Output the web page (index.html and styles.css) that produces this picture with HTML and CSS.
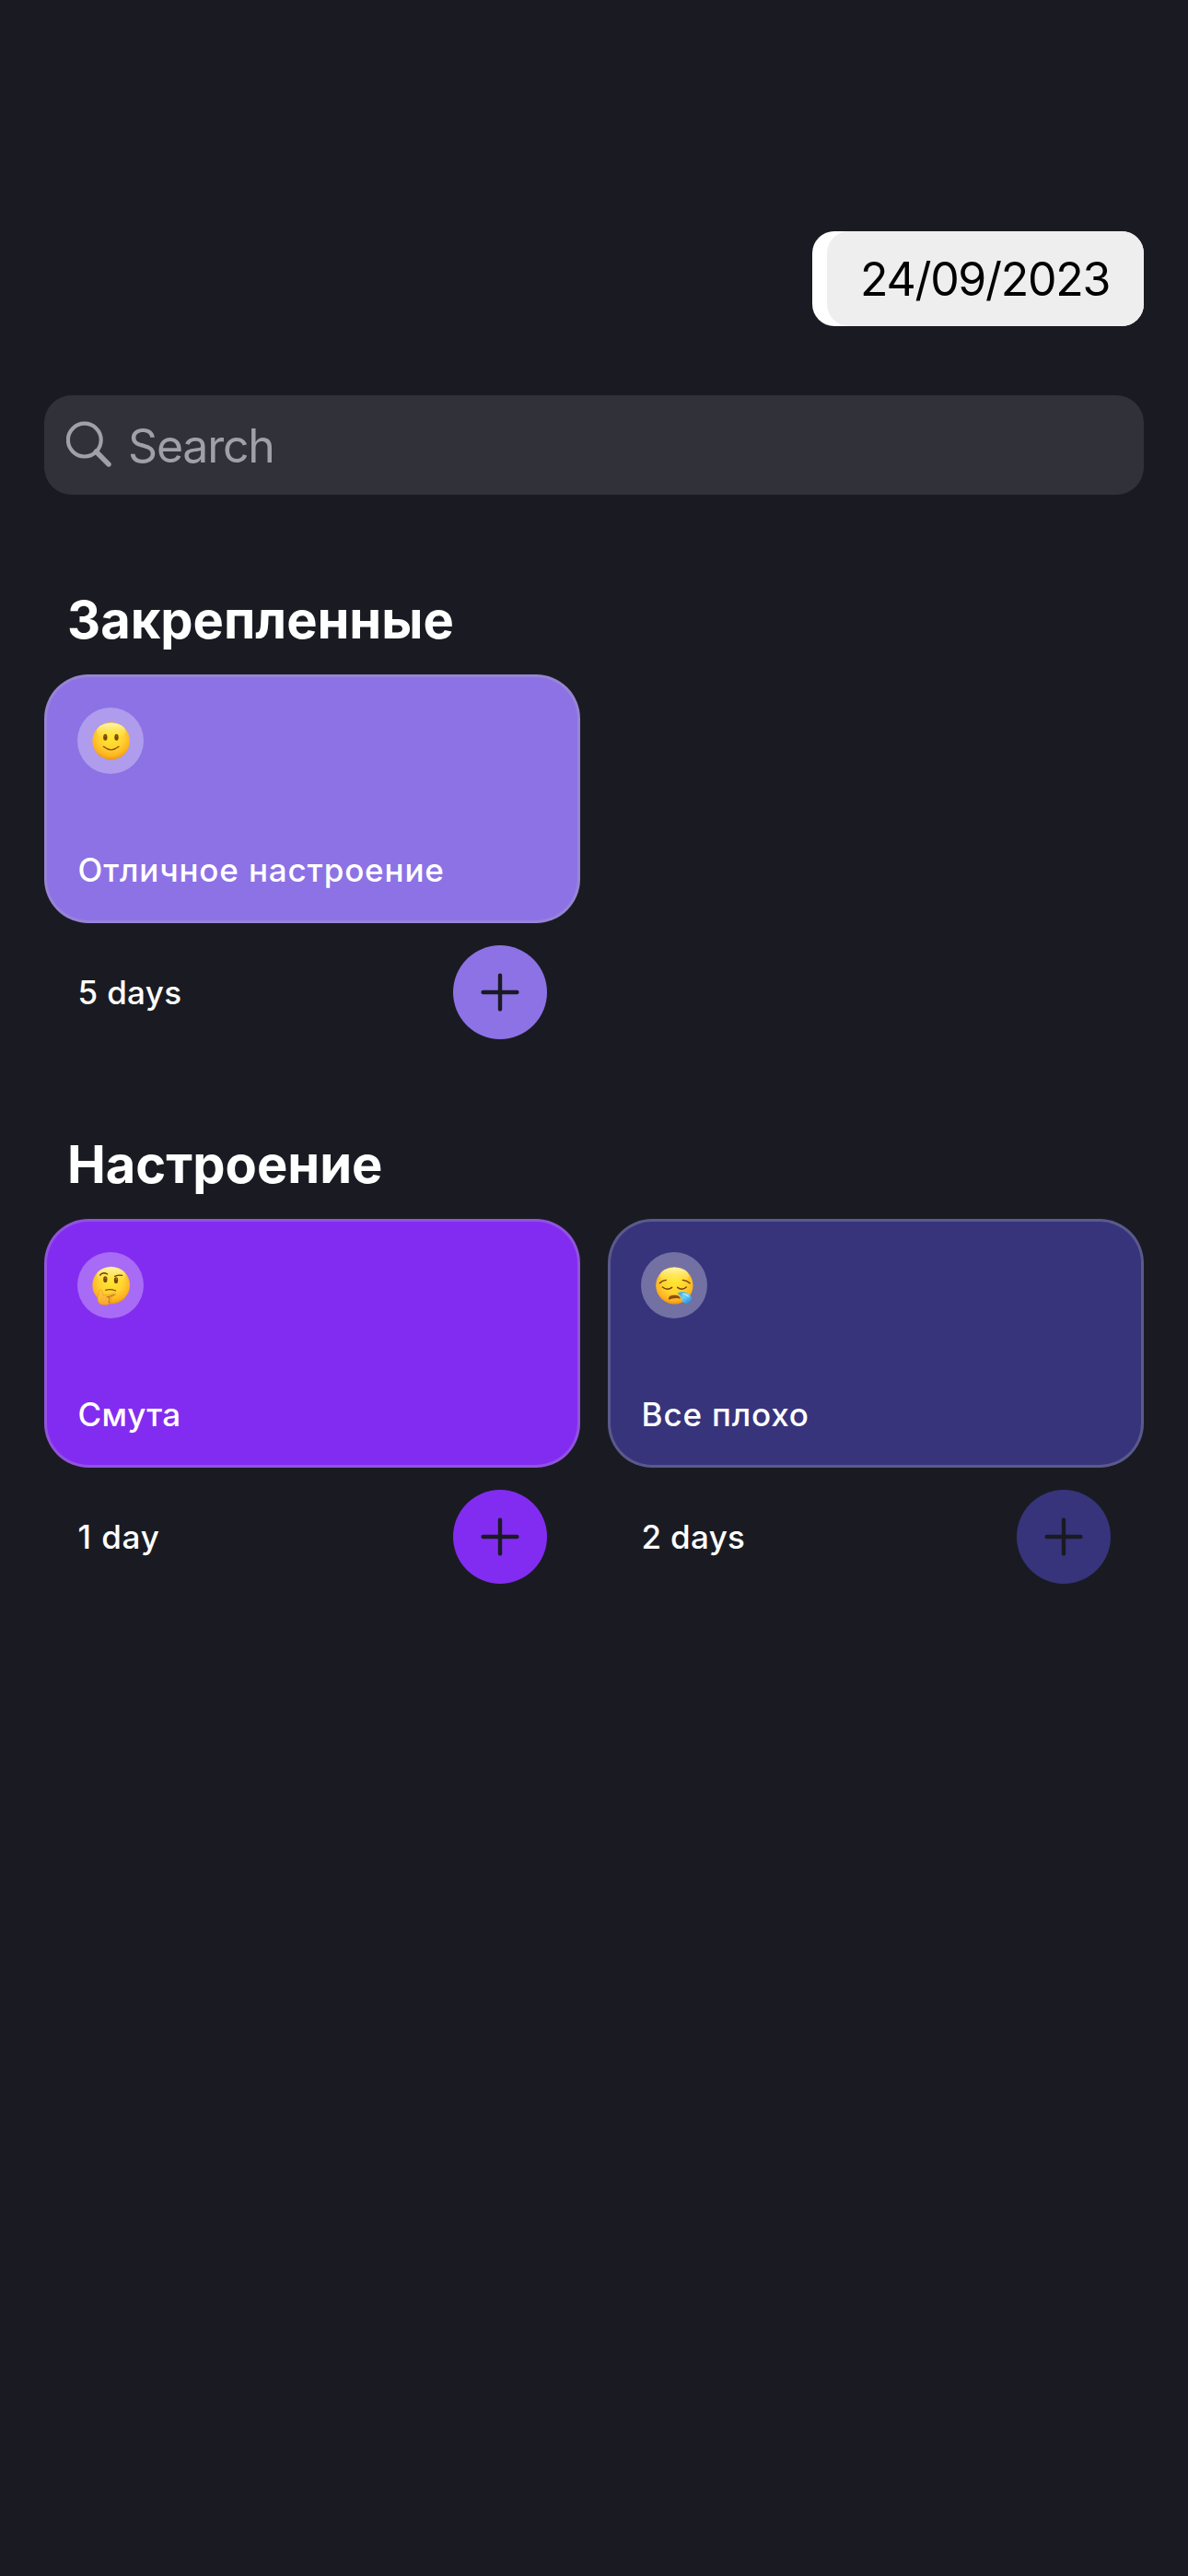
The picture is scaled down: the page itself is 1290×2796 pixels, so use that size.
FILE: index.html
```html
<!DOCTYPE html>
<html lang="ru">
<head>
<meta charset="utf-8">
<title>Трекеры</title>
<link rel="stylesheet" href="styles.css">
</head>
<body>
<svg class="defs" aria-hidden="true">
  <defs>
    <radialGradient id="face" cx="0.5" cy="0.38" r="0.66">
      <stop offset="0" stop-color="#ffe62e"/>
      <stop offset="0.5" stop-color="#ffd230"/>
      <stop offset="0.8" stop-color="#fdb220"/>
      <stop offset="1" stop-color="#e58709"/>
    </radialGradient>
    <linearGradient id="shine" x1="0" y1="0" x2="0" y2="1">
      <stop offset="0" stop-color="#fffcc8" stop-opacity="0.85"/>
      <stop offset="1" stop-color="#fff04a" stop-opacity="0"/>
    </linearGradient>
    <linearGradient id="hand" x1="0" y1="0" x2="0" y2="1">
      <stop offset="0" stop-color="#ffd24a"/>
      <stop offset="1" stop-color="#f9a32a"/>
    </linearGradient>
    <linearGradient id="drop" x1="0" y1="0" x2="0.8" y2="1">
      <stop offset="0" stop-color="#2f9fe6"/>
      <stop offset="0.5" stop-color="#6fd0fb"/>
      <stop offset="1" stop-color="#2190dc"/>
    </linearGradient>
    <symbol id="plus" viewBox="0 0 42 42">
      <path d="M21 2.6V39.4M2.6 21H39.4" fill="none" stroke="#1a1b22" stroke-width="4.4" stroke-linecap="round"/>
    </symbol>
  </defs>
</svg>
<main class="screen">
  <header class="top">
    <div class="date"><span class="date-value">24/09/2023</span></div>
  </header>
  <div class="search">
    <svg class="search-icon" viewBox="0 0 52 52">
      <circle cx="19.8" cy="20.6" r="17.9" fill="none" stroke="#a0a0a9" stroke-width="4.2"/>
      <path d="M32.4 33.2 45.9 46.9" stroke="#a0a0a9" stroke-width="5.6" stroke-linecap="round"/>
    </svg>
    <span class="placeholder">Search</span>
  </div>

  <section class="group">
    <h2>Закрепленные</h2>
    <div class="grid">
      <article class="tracker lavender">
        <div class="card">
          <svg class="emoji" viewBox="0 0 216 216" role="img" aria-label="Улыбка">
            <circle cx="110" cy="109" r="61" fill="url(#face)"/>
            <ellipse cx="110" cy="77" rx="47" ry="27" fill="url(#shine)"/>
            <g fill="#7a4308"><ellipse cx="91" cy="97" rx="6.5" ry="10.5"/><ellipse cx="127.5" cy="97" rx="6.5" ry="10.5"/></g>
            <g fill="#a87432"><circle cx="91" cy="93" r="2.5"/><circle cx="127.5" cy="93" r="2.5"/></g>
            <path d="M85 127Q110 148 135 127" fill="none" stroke="#87500b" stroke-width="4" stroke-linecap="round"/>
          </svg>
          <p class="wide">Отличное настроение</p>
        </div>
        <div class="footer"><span class="count">5 days</span><button aria-label="Добавить"><svg><use href="#plus"/></svg></button></div>
      </article>
    </div>
  </section>

  <section class="group">
    <h2>Настроение</h2>
    <div class="grid">
      <article class="tracker violet">
        <div class="card">
          <svg class="emoji" viewBox="0 0 216 216" role="img" aria-label="Задумчивость">
            <circle cx="110" cy="108" r="61" fill="url(#face)"/>
            <ellipse cx="110" cy="76" rx="47" ry="27" fill="url(#shine)"/>
            <g fill="#7a4308"><ellipse cx="91" cy="89" rx="6.5" ry="10"/><ellipse cx="126" cy="92" rx="6.5" ry="10"/></g>
            <g fill="#a87432"><circle cx="92" cy="85" r="2.5"/><circle cx="127" cy="88" r="2.5"/></g>
            <path d="M74 75Q83 63 98 72M122 79Q133 74 146 76" fill="none" stroke="#6b3a0a" stroke-width="4" stroke-linecap="round"/>
            <path d="M92 124Q107 119 125 126" fill="none" stroke="#87500b" stroke-width="3.5" stroke-linecap="round"/>
            <path d="M71 127C75 120 81 125 81 132L84 141C96 143 108 136 118 134C126 132 128 139 121 142L108 147C112 149 112 154 109 156C111 160 110 164 106 165C105 171 98 173 88 172C72 173 65 163 66 149C67 141 74 139 71 127Z" fill="url(#hand)" stroke="#df8d19" stroke-width="1.5"/>
            <path d="M96 147Q105 145 120 139M104 148V154M103 158V165" fill="none" stroke="#b86410" stroke-width="3" stroke-linecap="round"/>
          </svg>
          <p>Смута</p>
        </div>
        <div class="footer"><span class="count wide">1 day</span><button aria-label="Добавить"><svg><use href="#plus"/></svg></button></div>
      </article>
      <article class="tracker indigo">
        <div class="card">
          <svg class="emoji" viewBox="0 0 216 216" role="img" aria-label="Сонливость">
            <circle cx="109" cy="109" r="60.5" fill="url(#face)"/>
            <ellipse cx="109" cy="77" rx="47" ry="27" fill="url(#shine)"/>
            <g fill="none" stroke="#71400b" stroke-width="4.2" stroke-linecap="round">
              <path d="M61 101Q69 92 82 91M136 91Q149 92 159 101"/>
              <path d="M70 114Q86 127 101 115M119 115Q134 127 148 114"/>
            </g>
            <path d="M90 151C91 143 99 140 109 140C120 140 128 144 128 152C116 148 101 152 92 155Q89 155 90 151Z" fill="#8b4d0d"/>
            <path d="M119 134C133 127 153 129 161 141C170 154 158 168 145 167C132 165 133 143 119 134Z" fill="url(#drop)"/>
            <path d="M138 137Q149 136 154 144" fill="none" stroke="#c5f0ff" stroke-width="4" stroke-linecap="round"/>
          </svg>
          <p class="wide">Все плохо</p>
        </div>
        <div class="footer"><span class="count">2 days</span><button aria-label="Добавить"><svg><use href="#plus"/></svg></button></div>
      </article>
    </div>
  </section>
</main>
</body>
</html>
```

FILE: styles.css
```css
* {
  box-sizing: border-box;
  margin: 0;
}

body {
  background: #1a1b22;
  color: #fff;
  font-family: Inter, "Liberation Sans", sans-serif;
}

.defs {
  display: block;
  width: 0;
  height: 0;
}

.screen {
  width: 1290px;
  height: 2796px;
  padding: 251px 48px 0;
}

.top {
  display: flex;
  justify-content: flex-end;
}

.date {
  width: 360px;
  height: 103px;
  padding-left: 16px;
  border-radius: 24px;
  background: #fff;
  color: #000;
}

.date-value {
  display: block;
  height: 103px;
  padding-left: 36px;
  border-radius: 24px;
  background: #eee;
  font-size: 50px;
  line-height: 105px;
  letter-spacing: -1.3px;
}

.search {
  display: flex;
  align-items: center;
  height: 108px;
  margin-top: 75px;
  padding-left: 24px;
  border-radius: 30px;
  background: #31313a;
  color: #a0a0a9;
}

.search-icon {
  width: 52px;
  height: 52px;
}

.placeholder {
  margin-left: 15px;
  font-size: 50px;
  line-height: 106px;
  padding-top: 2px;
  letter-spacing: -1.2px;
}

.group {
  padding-top: 105px;
}

h2 {
  height: 60px;
  padding-left: 25px;
  font-size: 56px;
  font-weight: 700;
  line-height: 62px;
}

.grid {
  display: grid;
  grid-template-columns: 582px 582px;
  column-gap: 30px;
  margin-top: 30px;
}

.card {
  display: flex;
  flex-direction: column;
  justify-content: space-between;
  height: 270px;
  padding: 33px 33px 35px;
  border: 3px solid rgba(174, 175, 180, 0.3);
  border-radius: 48px;
  background: var(--tint);
}

.emoji {
  width: 72px;
  height: 72px;
  border-radius: 50%;
  background: rgba(255, 255, 255, 0.3);
}

.card p,
.count {
  padding-left: 0.6px;
  font-size: 35px;
  font-weight: 500;
  line-height: 40px;
  letter-spacing: 0.3px;
}

.card .wide,
.count.wide {
  letter-spacing: 0.84px;
}

.footer {
  display: flex;
  align-items: center;
  justify-content: space-between;
  height: 102px;
  margin-top: 24px;
  padding: 0 36px;
}

.footer button {
  display: grid;
  place-items: center;
  width: 102px;
  height: 102px;
  padding: 0;
  border: 0;
  border-radius: 50%;
  background: var(--tint);
}

.footer button svg {
  width: 42px;
  height: 42px;
}

.lavender {
  --tint: #8d72e6;
}

.violet {
  --tint: #832cf1;
}

.indigo {
  --tint: #37347c;
}
```
